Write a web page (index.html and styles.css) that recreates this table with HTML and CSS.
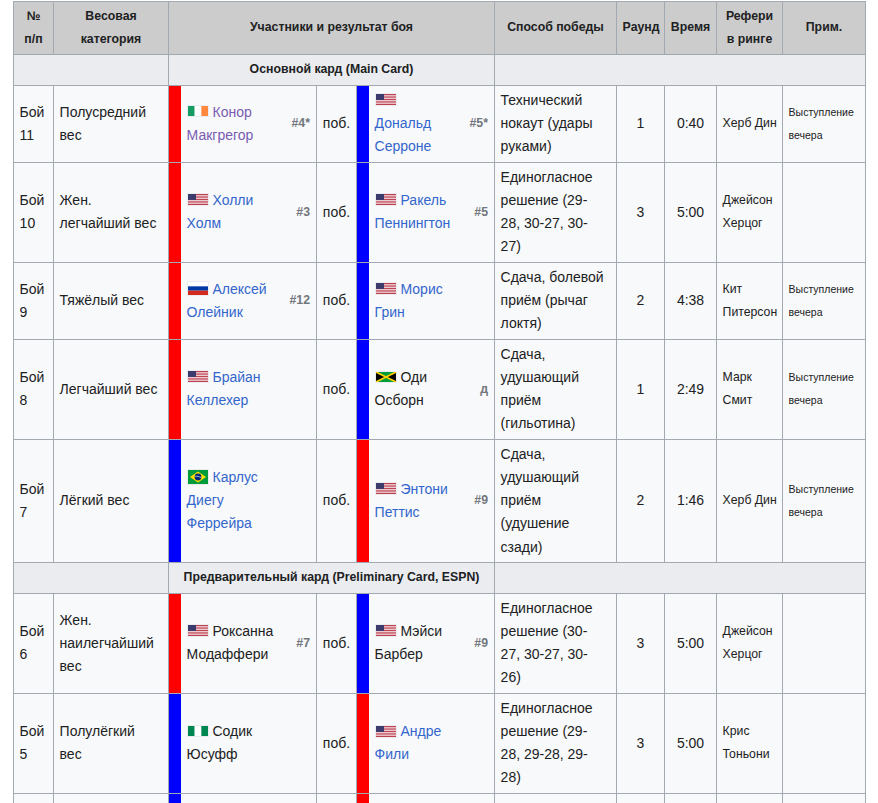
FILE: index.html
```html
<!DOCTYPE html>
<html lang="ru">
<head>
<meta charset="utf-8">
<title>Карта турнира</title>
<link rel="stylesheet" href="styles.css">
</head>
<body>
<div class="page">
<table class="fights">
  <colgroup>
    <col class="c-num"><col class="c-weight"><col class="c-bar"><col class="c-name1"><col class="c-rank1"><col class="c-pob"><col class="c-bar"><col class="c-name2"><col class="c-rank2"><col class="c-method"><col class="c-round"><col class="c-time"><col class="c-ref"><col class="c-note">
  </colgroup>
  <thead>
    <tr class="head">
      <th>№ п/п</th>
      <th>Весовая категория</th>
      <th colspan="7">Участники и результат боя</th>
      <th>Способ победы</th>
      <th>Раунд</th>
      <th>Время</th>
      <th>Рефери в ринге</th>
      <th>Прим.</th>
    </tr>
  </thead>
  <tbody>
    <tr class="section">
      <th colspan="2"></th>
      <th colspan="7">Основной кард (Main Card)</th>
      <th colspan="5"></th>
    </tr>
    <tr>
      <td>Бой 11</td>
      <td>Полусредний вес</td>
      <td class="bar red"></td>
      <td class="name"><span class="flag"><svg width="20" height="10" viewBox="0 0 3 1" preserveAspectRatio="none"><rect width="1" height="1" fill="#169b62"/><rect x="1" width="1" height="1" fill="#fff"/><rect x="2" width="1" height="1" fill="#ff883e"/></svg></span> <a class="visited">Конор Макгрегор</a></td>
      <td class="rank">#4*</td>
      <td class="pob">поб.</td>
      <td class="bar blue"></td>
      <td class="name"><span class="flag"><svg width="20" height="11" viewBox="0 0 247 130" preserveAspectRatio="none"><rect width="247" height="130" fill="#fff"/><g fill="#b22234"><rect y="0" width="247" height="10"/><rect y="20" width="247" height="10"/><rect y="40" width="247" height="10"/><rect y="60" width="247" height="10"/><rect y="80" width="247" height="10"/><rect y="100" width="247" height="10"/><rect y="120" width="247" height="10"/></g><rect width="99" height="70" fill="#3c3b6e"/></svg></span> <a>Дональд Серроне</a></td>
      <td class="rank">#5*</td>
      <td class="method">Технический нокаут (удары руками)</td>
      <td class="center">1</td>
      <td class="center">0:40</td>
      <td class="ref">Херб Дин</td>
      <td class="note">Выступление вечера</td>
    </tr>
    <tr>
      <td>Бой 10</td>
      <td>Жен. легчайший вес</td>
      <td class="bar red"></td>
      <td class="name"><span class="flag"><svg width="20" height="11" viewBox="0 0 247 130" preserveAspectRatio="none"><rect width="247" height="130" fill="#fff"/><g fill="#b22234"><rect y="0" width="247" height="10"/><rect y="20" width="247" height="10"/><rect y="40" width="247" height="10"/><rect y="60" width="247" height="10"/><rect y="80" width="247" height="10"/><rect y="100" width="247" height="10"/><rect y="120" width="247" height="10"/></g><rect width="99" height="70" fill="#3c3b6e"/></svg></span> <a>Холли Холм</a></td>
      <td class="rank">#3</td>
      <td class="pob">поб.</td>
      <td class="bar blue"></td>
      <td class="name"><span class="flag"><svg width="20" height="11" viewBox="0 0 247 130" preserveAspectRatio="none"><rect width="247" height="130" fill="#fff"/><g fill="#b22234"><rect y="0" width="247" height="10"/><rect y="20" width="247" height="10"/><rect y="40" width="247" height="10"/><rect y="60" width="247" height="10"/><rect y="80" width="247" height="10"/><rect y="100" width="247" height="10"/><rect y="120" width="247" height="10"/></g><rect width="99" height="70" fill="#3c3b6e"/></svg></span> <a>Ракель Пеннингтон</a></td>
      <td class="rank">#5</td>
      <td class="method">Единогласное<br>решение (29-<br>28, 30-27, 30-<br>27)</td>
      <td class="center">3</td>
      <td class="center">5:00</td>
      <td class="ref">Джейсон Херцог</td>
      <td class="note"></td>
    </tr>
    <tr>
      <td>Бой 9</td>
      <td>Тяжёлый вес</td>
      <td class="bar red"></td>
      <td class="name"><span class="flag"><svg width="20" height="13" viewBox="0 0 3 3" preserveAspectRatio="none"><rect width="3" height="1" fill="#fff"/><rect y="1" width="3" height="1" fill="#0039a6"/><rect y="2" width="3" height="1" fill="#d52b1e"/></svg></span> <a>Алексей Олейник</a></td>
      <td class="rank">#12</td>
      <td class="pob">поб.</td>
      <td class="bar blue"></td>
      <td class="name"><span class="flag"><svg width="20" height="11" viewBox="0 0 247 130" preserveAspectRatio="none"><rect width="247" height="130" fill="#fff"/><g fill="#b22234"><rect y="0" width="247" height="10"/><rect y="20" width="247" height="10"/><rect y="40" width="247" height="10"/><rect y="60" width="247" height="10"/><rect y="80" width="247" height="10"/><rect y="100" width="247" height="10"/><rect y="120" width="247" height="10"/></g><rect width="99" height="70" fill="#3c3b6e"/></svg></span> <a>Морис Грин</a></td>
      <td class="rank"></td>
      <td class="method">Сдача, болевой приём (рычаг локтя)</td>
      <td class="center">2</td>
      <td class="center">4:38</td>
      <td class="ref">Кит Питерсон</td>
      <td class="note">Выступление вечера</td>
    </tr>
    <tr>
      <td>Бой 8</td>
      <td>Легчайший вес</td>
      <td class="bar red"></td>
      <td class="name"><span class="flag"><svg width="20" height="11" viewBox="0 0 247 130" preserveAspectRatio="none"><rect width="247" height="130" fill="#fff"/><g fill="#b22234"><rect y="0" width="247" height="10"/><rect y="20" width="247" height="10"/><rect y="40" width="247" height="10"/><rect y="60" width="247" height="10"/><rect y="80" width="247" height="10"/><rect y="100" width="247" height="10"/><rect y="120" width="247" height="10"/></g><rect width="99" height="70" fill="#3c3b6e"/></svg></span> <a>Брайан Келлехер</a></td>
      <td class="rank"></td>
      <td class="pob">поб.</td>
      <td class="bar blue"></td>
      <td class="name"><span class="flag"><svg width="20" height="10" viewBox="0 0 12 6" preserveAspectRatio="none"><rect width="12" height="6" fill="#009b3a"/><polygon points="0,0 6,3 0,6" fill="#000"/><polygon points="12,0 6,3 12,6" fill="#000"/><path d="M0,0 L12,6 M12,0 L0,6" stroke="#fed100" stroke-width="1"/></svg></span> Оди Осборн</td>
      <td class="rank">д</td>
      <td class="method">Сдача, удушающий приём (гильотина)</td>
      <td class="center">1</td>
      <td class="center">2:49</td>
      <td class="ref">Марк Смит</td>
      <td class="note">Выступление вечера</td>
    </tr>
    <tr>
      <td>Бой 7</td>
      <td>Лёгкий вес</td>
      <td class="bar blue"></td>
      <td class="name"><span class="flag"><svg width="20" height="14" viewBox="0 0 20 14"><rect width="20" height="14" fill="#009c3b"/><polygon points="2,7 10,1.5 18,7 10,12.5" fill="#ffdf00"/><circle cx="10" cy="7" r="3.4" fill="#002776"/><path d="M6.8,6.3 Q10,5.6 13.2,7.6" stroke="#fff" stroke-width="0.6" fill="none"/></svg></span> <a>Карлус Диегу Феррейра</a></td>
      <td class="rank"></td>
      <td class="pob">поб.</td>
      <td class="bar red"></td>
      <td class="name"><span class="flag"><svg width="20" height="11" viewBox="0 0 247 130" preserveAspectRatio="none"><rect width="247" height="130" fill="#fff"/><g fill="#b22234"><rect y="0" width="247" height="10"/><rect y="20" width="247" height="10"/><rect y="40" width="247" height="10"/><rect y="60" width="247" height="10"/><rect y="80" width="247" height="10"/><rect y="100" width="247" height="10"/><rect y="120" width="247" height="10"/></g><rect width="99" height="70" fill="#3c3b6e"/></svg></span> <a>Энтони Петтис</a></td>
      <td class="rank">#9</td>
      <td class="method">Сдача, удушающий приём (удушение сзади)</td>
      <td class="center">2</td>
      <td class="center">1:46</td>
      <td class="ref">Херб Дин</td>
      <td class="note">Выступление вечера</td>
    </tr>
    <tr class="section">
      <th colspan="2"></th>
      <th colspan="7">Предварительный кард (Preliminary Card, ESPN)</th>
      <th colspan="5"></th>
    </tr>
    <tr>
      <td>Бой 6</td>
      <td>Жен. наилегчайший вес</td>
      <td class="bar red"></td>
      <td class="name"><span class="flag"><svg width="20" height="11" viewBox="0 0 247 130" preserveAspectRatio="none"><rect width="247" height="130" fill="#fff"/><g fill="#b22234"><rect y="0" width="247" height="10"/><rect y="20" width="247" height="10"/><rect y="40" width="247" height="10"/><rect y="60" width="247" height="10"/><rect y="80" width="247" height="10"/><rect y="100" width="247" height="10"/><rect y="120" width="247" height="10"/></g><rect width="99" height="70" fill="#3c3b6e"/></svg></span> Роксанна Модаффери</td>
      <td class="rank">#7</td>
      <td class="pob">поб.</td>
      <td class="bar blue"></td>
      <td class="name"><span class="flag"><svg width="20" height="11" viewBox="0 0 247 130" preserveAspectRatio="none"><rect width="247" height="130" fill="#fff"/><g fill="#b22234"><rect y="0" width="247" height="10"/><rect y="20" width="247" height="10"/><rect y="40" width="247" height="10"/><rect y="60" width="247" height="10"/><rect y="80" width="247" height="10"/><rect y="100" width="247" height="10"/><rect y="120" width="247" height="10"/></g><rect width="99" height="70" fill="#3c3b6e"/></svg></span> Мэйси Барбер</td>
      <td class="rank">#9</td>
      <td class="method">Единогласное<br>решение (30-<br>27, 30-27, 30-<br>26)</td>
      <td class="center">3</td>
      <td class="center">5:00</td>
      <td class="ref">Джейсон Херцог</td>
      <td class="note"></td>
    </tr>
    <tr>
      <td>Бой 5</td>
      <td>Полулёгкий<br>вес</td>
      <td class="bar blue"></td>
      <td class="name"><span class="flag"><svg width="20" height="10" viewBox="0 0 3 1" preserveAspectRatio="none"><rect width="1" height="1" fill="#008751"/><rect x="1" width="1" height="1" fill="#fff"/><rect x="2" width="1" height="1" fill="#008751"/></svg></span> Содик Юсуфф</td>
      <td class="rank"></td>
      <td class="pob">поб.</td>
      <td class="bar red"></td>
      <td class="name"><span class="flag"><svg width="20" height="11" viewBox="0 0 247 130" preserveAspectRatio="none"><rect width="247" height="130" fill="#fff"/><g fill="#b22234"><rect y="0" width="247" height="10"/><rect y="20" width="247" height="10"/><rect y="40" width="247" height="10"/><rect y="60" width="247" height="10"/><rect y="80" width="247" height="10"/><rect y="100" width="247" height="10"/><rect y="120" width="247" height="10"/></g><rect width="99" height="70" fill="#3c3b6e"/></svg></span> <a>Андре Фили</a></td>
      <td class="rank"></td>
      <td class="method">Единогласное<br>решение (29-<br>28, 29-28, 29-<br>28)</td>
      <td class="center">3</td>
      <td class="center">5:00</td>
      <td class="ref">Крис Тоньони</td>
      <td class="note"></td>
    </tr>
    <tr>
      <td>Бой 4</td>
      <td>Жен. минимальный вес</td>
      <td class="bar blue"></td>
      <td class="name"><span class="flag"><svg width="20" height="11" viewBox="0 0 3 1" preserveAspectRatio="none"><rect width="1" height="1" fill="#006847"/><rect x="1" width="1" height="1" fill="#fff"/><rect x="2" width="1" height="1" fill="#ce1126"/></svg></span> <a>Алекса Грассо</a></td>
      <td class="rank"></td>
      <td class="pob">поб.</td>
      <td class="bar red"></td>
      <td class="name"><span class="flag"><svg width="20" height="14" viewBox="0 0 20 14"><rect width="20" height="14" fill="#009c3b"/><polygon points="2,7 10,1.5 18,7 10,12.5" fill="#ffdf00"/><circle cx="10" cy="7" r="3.4" fill="#002776"/></svg></span> <a>Клаудия Гаделья</a></td>
      <td class="rank">#8</td>
      <td class="method">Единогласное<br>решение (29-<br>28, 29-28, 29-<br>28)</td>
      <td class="center">3</td>
      <td class="center">5:00</td>
      <td class="ref">Марк Смит</td>
      <td class="note"></td>
    </tr>
  </tbody>
</table>
</div>
</body>
</html>
```

FILE: styles.css
```css
html, body {
  margin: 0;
  padding: 0;
  background: #ffffff;
}

body {
  font-family: "Liberation Sans", Arial, sans-serif;
  color: #202122;
}

.page {
  padding: 1px 0 0 13px;
}

.fights {
  border-collapse: separate;
  border-spacing: 0;
  table-layout: fixed;
  width: 853px;
  border-top: 1px solid #a2a9b1;
  border-left: 1px solid #a2a9b1;
  background: #f8f9fa;
  font-size: 14px;
  line-height: 23.1px;
}

.c-num { width: 40px; }
.c-weight { width: 115px; }
.c-bar { width: 12px; }
.c-name1 { width: 106px; }
.c-rank1 { width: 30px; }
.c-pob { width: 40px; }
.c-name2 { width: 93px; }
.c-rank2 { width: 33px; }
.c-method { width: 122px; }
.c-round { width: 48px; }
.c-time { width: 52px; }
.c-ref { width: 66px; }
.c-note { width: 83px; }

.fights th,
.fights td {
  border-right: 1px solid #a2a9b1;
  border-bottom: 1px solid #a2a9b1;
  padding: 3.35px 5.6px;
  vertical-align: middle;
  text-align: left;
}

.fights th {
  font-weight: bold;
  font-size: 12.3px;
  text-align: center;
}

.head th {
  background: #cccccc;
  padding-top: 2.9px;
  padding-bottom: 2.9px;
}

.section th {
  background: #eaecf0;
  padding-top: 3.35px;
  padding-bottom: 3.35px;
}

.fights td.bar {
  padding: 0;
  border-right: 0;
}

.bar.red { background: #ff0000; }
.bar.blue { background: #0000ff; }

.fights td.name {
  border-right: 0;
  padding-right: 6px;
}

.fights td.rank {
  padding: 0 6px 0 0;
  text-align: right;
  white-space: nowrap;
  font-size: 12.3px;
  font-weight: bold;
  color: #72777d;
}

.fights td.pob {
  text-align: center;
}

.fights td.center {
  text-align: center;
}

.fights td.ref {
  font-size: 12.25px;
  padding-right: 3px;
}

.fights td.note {
  font-size: 10.5px;
}

a {
  color: #3366cc;
  text-decoration: none;
}

a.visited {
  color: #795cb2;
}

.flag {
  display: inline-block;
  vertical-align: middle;
  border: 1px solid #eaecf0;
  line-height: 0;
  margin-top: -3px;
}

.flag svg {
  display: block;
}
```
